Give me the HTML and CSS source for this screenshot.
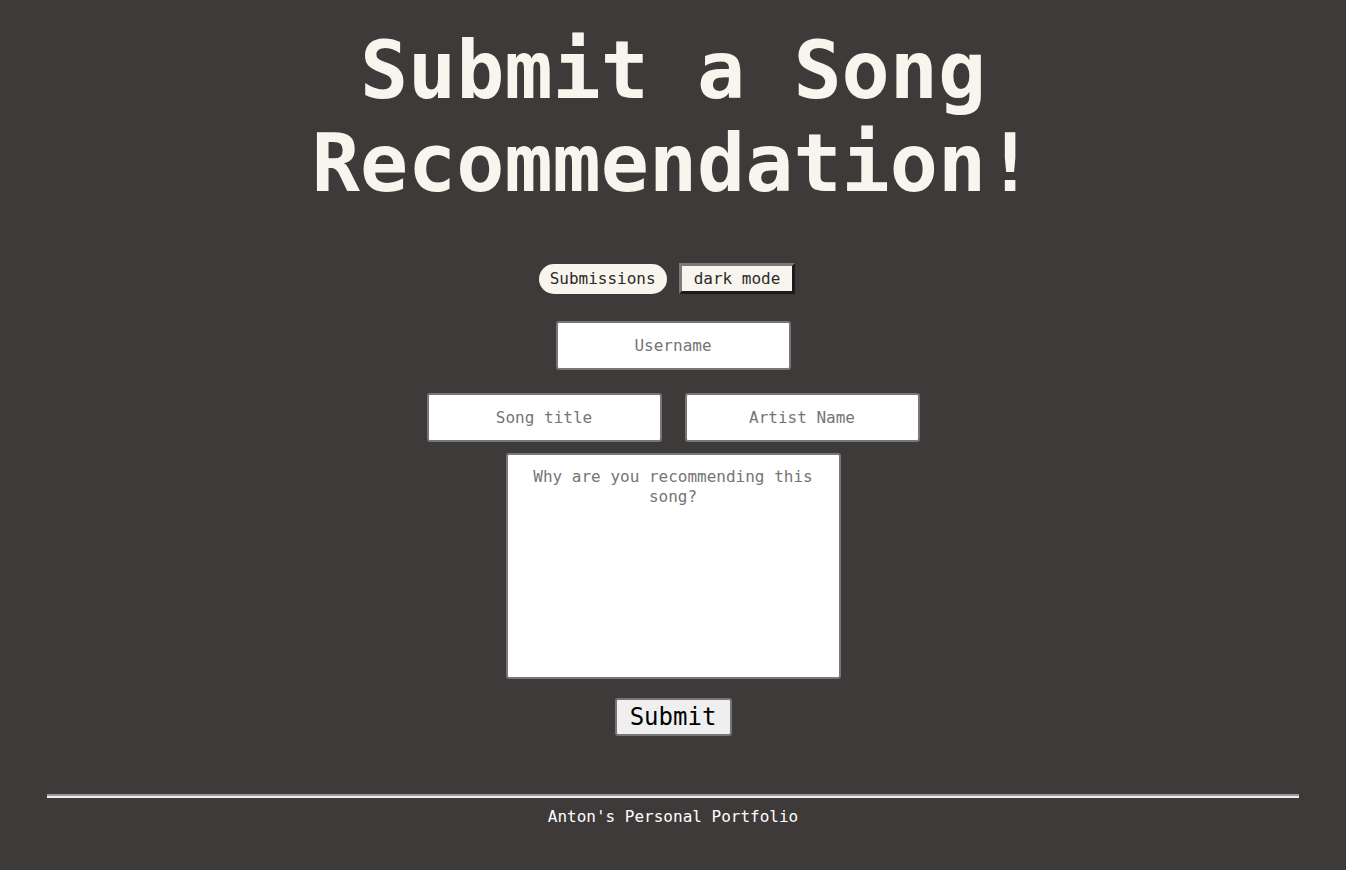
FILE: index.html
```html
<!DOCTYPE html>
<html lang="en">
<head>
<meta charset="utf-8">
<title>Submit a Song Recommendation!</title>
<link rel="stylesheet" href="styles.css">
</head>
<body>
<main class="page">
  <h1 class="title">Submit a Song Recommendation!</h1>
  <div class="actions">
    <button class="pill" type="button">Submissions</button>
    <button class="mode" type="button">dark mode</button>
  </div>
  <form class="form">
    <input class="field" type="text" placeholder="Username">
    <div class="pair">
      <input class="field" type="text" placeholder="Song title">
      <input class="field" type="text" placeholder="Artist Name">
    </div>
    <textarea class="reason" placeholder="Why are you recommending this song?"></textarea>
    <button class="submit" type="submit">Submit</button>
  </form>
</main>
<footer class="footer">
  <hr class="rule">
  <p class="credit">Anton's Personal Portfolio</p>
</footer>
</body>
</html>
```

FILE: styles.css
```css
html, body {
  margin: 0;
  padding: 0;
}
body {
  background: #3e3a39;
  font-family: "DejaVu Sans Mono", monospace;
  color: #f8f5ee;
  padding: 0 8px;
}
.page {
  display: flex;
  flex-direction: column;
  align-items: center;
}
.title {
  margin: 24px 0 0;
  width: 740px;
  font-size: 80px;
  line-height: 93px;
  font-weight: bold;
  text-align: center;
  color: #f8f5ee;
}
.actions {
  display: flex;
  gap: 12px;
  align-items: center;
  margin-top: 53px;
  height: 31px;
  padding-right: 12px;
}
.pill {
  font-family: "DejaVu Sans Mono", monospace;
  font-size: 16px;
  height: 30px;
  padding: 0 11px;
  border: none;
  border-radius: 15px;
  background: #f8f5ee;
  color: #2d2a29;
}
.mode {
  font-family: "DejaVu Sans Mono", monospace;
  font-size: 16px;
  height: 31px;
  padding: 0 12px;
  border: 3px solid;
  border-color: #7a7a7a #1c1c1c #1c1c1c #7a7a7a;
  background: #f8f5ee;
  color: #2d2a29;
}
.form {
  display: flex;
  flex-direction: column;
  align-items: center;
  margin-top: 27px;
}
.field {
  box-sizing: border-box;
  width: 235px;
  height: 49px;
  border: 2px solid #767676;
  border-radius: 3px;
  background: #fff;
  font-family: "DejaVu Sans Mono", monospace;
  font-size: 16px;
  text-align: center;
  color: #222;
  padding: 0 8px;
}
.field::placeholder,
.reason::placeholder {
  color: #757575;
}
.pair {
  display: flex;
  gap: 23px;
  margin-top: 23px;
}
.reason {
  box-sizing: border-box;
  width: 335px;
  height: 226px;
  margin-top: 11px;
  border: 2px solid #767676;
  border-radius: 3px;
  background: #fff;
  font-family: "DejaVu Sans Mono", monospace;
  font-size: 16px;
  line-height: 20px;
  text-align: center;
  padding: 12px 20px;
  resize: none;
}
.submit {
  box-sizing: border-box;
  margin-top: 19px;
  width: 117px;
  height: 38px;
  border: 2px solid #767676;
  border-radius: 3px;
  background: #efefef;
  color: #000;
  font-family: "DejaVu Sans Mono", monospace;
  font-size: 24px;
  padding: 0;
}
.footer {
  margin-top: 58px;
  padding-bottom: 40px;
}
.rule {
  margin: 0 39px;
  border: none;
  border-top: 2px solid #9a9a9a;
  border-bottom: 2px solid #eeeeee;
  height: 0;
}
.credit {
  margin: 9px 0 0;
  text-align: center;
  font-size: 16px;
  color: #ffffff;
}
```
